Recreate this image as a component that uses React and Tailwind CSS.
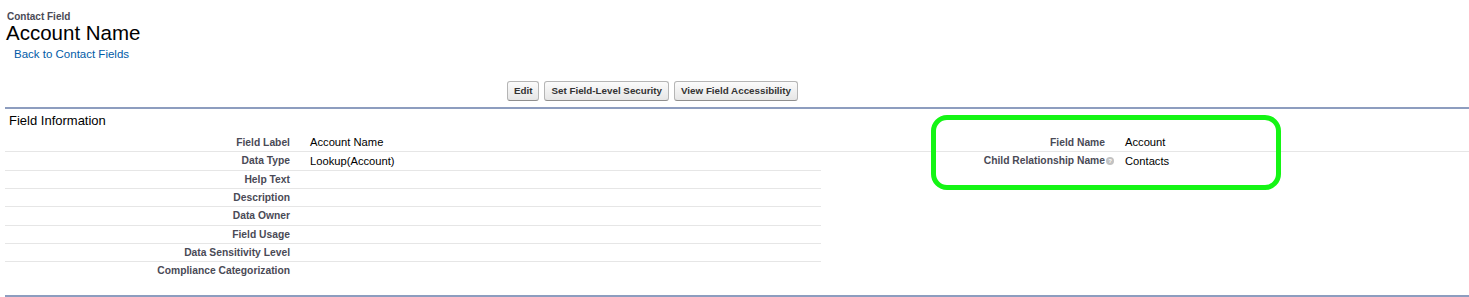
import React from "react";

const leftRows = [
  ["Field Label", "Account Name"],
  ["Data Type", "Lookup(Account)"],
  ["Help Text", ""],
  ["Description", ""],
  ["Data Owner", ""],
  ["Field Usage", ""],
  ["Data Sensitivity Level", ""],
  ["Compliance Categorization", ""],
];

const rightRows = [
  ["Field Name", "Account", false],
  ["Child Relationship Name", "Contacts", true],
];

const HelpOrb = () => (
  <span className="absolute left-full top-1/2 -translate-y-1/2 ml-[1px] w-[8px] h-[8px] rounded-full bg-[#c2c2c2] text-white text-[6px] font-bold leading-[8px] text-center">
    ?
  </span>
);

const Btn = ({ children }) => (
  <button className="h-[20px] px-[6px] rounded-[3px] border border-[#b5b5b5] border-b-[#8f8f8f] bg-gradient-to-b from-[#fbfbfb] to-[#e6e6e6] text-[9.8px] font-bold text-[#333]">
    {children}
  </button>
);

const App = () => {
  return (
    <div className="relative min-h-[297px] bg-white overflow-hidden font-['Liberation_Sans',Arial,sans-serif]">
      <div className="pl-[7px] pt-[11px]">
        <div className="text-[10px] leading-[11px] font-bold text-[#4a4a56]">Contact Field</div>
        <h1 className="-ml-[1px] text-[20.5px] leading-[22px] text-black">Account Name</h1>
        <a href="#" className="block mt-[3px] pl-[7px] text-[11.5px] leading-[14px] text-[#015ba7]">
          Back to Contact Fields
        </a>
      </div>

      <div className="ml-[5px] w-[1295px] mt-[20px] flex justify-center gap-[5px]">
        <Btn>Edit</Btn>
        <Btn>Set Field-Level Security</Btn>
        <Btn>View Field Accessibility</Btn>
      </div>

      <div className="ml-[5px] mt-[6px] border-t-2 border-b-2 border-[#8d9dbf] pb-[14px]">
        <h3 className="pt-[4px] pb-[5px] pl-[4px] text-[13px] leading-[16px] text-black">Field Information</h3>
        <div className="grid grid-cols-[295px_521px_294px_1fr]">
          {leftRows.map(([label, value], i) => {
            const right = rightRows[i];
            const leftLine = i < leftRows.length - 1 ? "border-[#e6e6e6]" : "border-transparent";
            const rightLine = i === 0 ? "border-[#e6e6e6]" : "border-transparent";
            return (
              <React.Fragment key={label}>
                <div className={`h-[18.33px] flex items-center justify-end pr-[10px] border-b ${leftLine} text-[10.3px] font-bold text-[#4a4a56]`}>
                  {label}
                </div>
                <div className={`h-[18.33px] flex items-center pl-[10px] border-b ${leftLine} text-[11.2px] text-black`}>
                  {value}
                </div>
                <div className={`h-[18.33px] flex items-center justify-end pr-[10px] border-b ${rightLine} text-[10.3px] font-bold text-[#4a4a56]`}>
                  {right && (
                    <span className="relative">
                      {right[0]}
                      {right[2] && <HelpOrb />}
                    </span>
                  )}
                </div>
                <div className={`h-[18.33px] flex items-center pl-[10px] border-b ${rightLine} text-[11.2px] text-black`}>
                  {right ? right[1] : ""}
                </div>
              </React.Fragment>
            );
          })}
        </div>
      </div>

      {/* highlight annotation */}
      <div className="absolute left-[931px] top-[115px] w-[350px] h-[75px] border-[5px] border-[#14f514] rounded-[16px] pointer-events-none" />
    </div>
  );
};

export default App;
